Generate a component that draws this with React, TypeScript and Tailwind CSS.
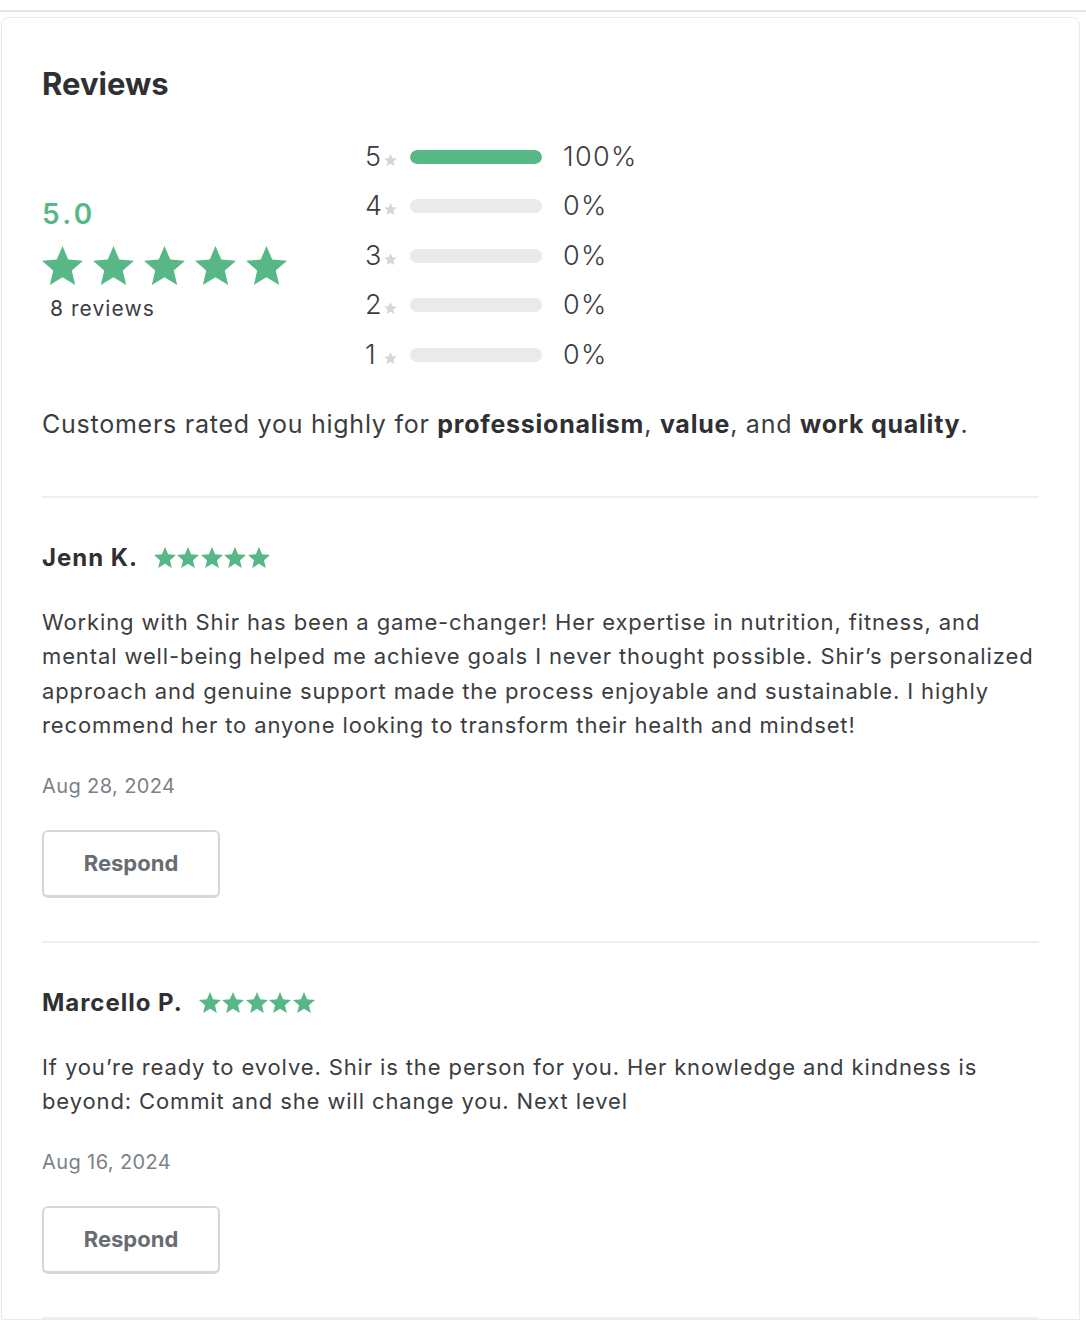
import type { ReactNode } from 'react';

const STAR = 'M12 17.27 18.18 21l-1.64-7.03L22 9.24l-7.19-.61L12 2 9.19 8.63 2 9.24l5.46 4.73L5.82 21z';

function Star({ className }: { className: string }) {
  return (
    <svg viewBox="2 2 20 19" className={className} aria-hidden="true">
      <path d={STAR} fill="currentColor" />
    </svg>
  );
}

const breakdown = [
  { stars: 5, pct: 100 },
  { stars: 4, pct: 0 },
  { stars: 3, pct: 0 },
  { stars: 2, pct: 0 },
  { stars: 1, pct: 0 },
];

const reviews = [
  {
    name: 'Jenn K.',
    text: "Working with Shir has been a game-changer! Her expertise in nutrition, fitness, and mental well-being helped me achieve goals I never thought possible. Shir\u2019s personalized approach and genuine support made the process enjoyable and sustainable. I highly recommend her to anyone looking to transform their health and mindset!",
    date: 'Aug 28, 2024',
  },
  {
    name: 'Marcello P.',
    text: 'If you\u2019re ready to evolve. Shir is the person for you. Her knowledge and kindness is beyond: Commit and she will change you. Next level',
    date: 'Aug 16, 2024',
  },
];

function Bold({ children }: { children: ReactNode }) {
  return <span className="font-bold text-[#2f3033]">{children}</span>;
}

function ReviewItem({ name, text, date }: { name: string; text: string; date: string }) {
  return (
    <div className="border-b-2 border-[#efefef] pt-[45px] pb-[43px]">
      <div className="flex items-center gap-[16px]">
        <span className="text-[24px] leading-[30px] font-bold tracking-[0.04em] text-[#2f3033]">{name}</span>
        <div className="flex gap-[1.5px] text-[#58b787]">
          {[0, 1, 2, 3, 4].map((i) => (
            <Star key={i} className="h-[21px] w-[22px]" />
          ))}
        </div>
      </div>
      <p className="mt-[32px] text-[22px] leading-[34.5px] tracking-[0.04em] text-[#3b3d40]">{text}</p>
      <div className="mt-[29px] text-[20px] leading-[28px] tracking-[0.02em] text-[#7c8186]">{date}</div>
      <button
        type="button"
        className="mt-[30px] flex h-[68px] w-[178px] items-center justify-center rounded-[6px] border-2 border-b-[3px] border-[#d5d7d9] bg-white text-[22px] font-bold text-[#676d73]"
      >
        Respond
      </button>
    </div>
  );
}

export default function App() {
  return (
    <div className="min-h-screen bg-white font-['Inter',sans-serif] text-[#2f3033]">
      <div className="h-[12px] border-b-2 border-[#e6e6e6]" />
      <div className="ml-[1px] mr-[6px] mt-[5px] rounded-t-[8px] border border-[#ebebeb] px-10 pt-[46px] shadow-[0_0_2px_rgba(0,0,0,0.04)]">
        <h2 className="text-[31px] leading-[40px] font-bold text-[#2f3033]">Reviews</h2>

        <div className="mt-[28px] flex">
          <div className="w-[323px] pt-[65px]">
            <div className="text-[28px] leading-[34px] font-semibold tracking-[0.12em] text-[#58b787]">5.0</div>
            <div className="mt-[15px] flex gap-[10px] text-[#58b787]">
              {[0, 1, 2, 3, 4].map((i) => (
                <Star key={i} className="h-[39px] w-[41px]" />
              ))}
            </div>
            <div className="ml-[8px] mt-[11px] text-[21px] leading-[26px] tracking-[0.05em] text-[#3b3d40]">8 reviews</div>
          </div>

          <div className="flex flex-col">
            {breakdown.map((row) => (
              <div key={row.stars} className="flex h-[49.5px] items-center">
                <span className="w-[19px] text-[27px] font-light text-[#3b3d40]">{row.stars}</span>
                <Star className="mt-[6px] h-[12px] w-[13px] text-[#d6d6d6]" />
                <div className="ml-[13px] h-[14px] w-[132px] overflow-hidden rounded-full bg-[#e9eaeb]">
                  <div className="h-full rounded-full bg-[#58b787]" style={{ width: `${row.pct}%` }} />
                </div>
                <span className="ml-[21px] text-[27px] font-light tracking-[0.05em] text-[#3b3d40]">{row.pct}%</span>
              </div>
            ))}
          </div>
        </div>

        <div className="mt-[28px] border-b-2 border-[#efefef] pb-[56px]">
          <p className="text-[25px] leading-[32px] tracking-[0.03em] text-[#3b3d40]">
            Customers rated you highly for <Bold>professionalism</Bold>, <Bold>value</Bold>, and{' '}
            <Bold>work quality</Bold>.
          </p>
        </div>

        {reviews.map((r) => (
          <ReviewItem key={r.name} {...r} />
        ))}
      </div>
    </div>
  );
}
